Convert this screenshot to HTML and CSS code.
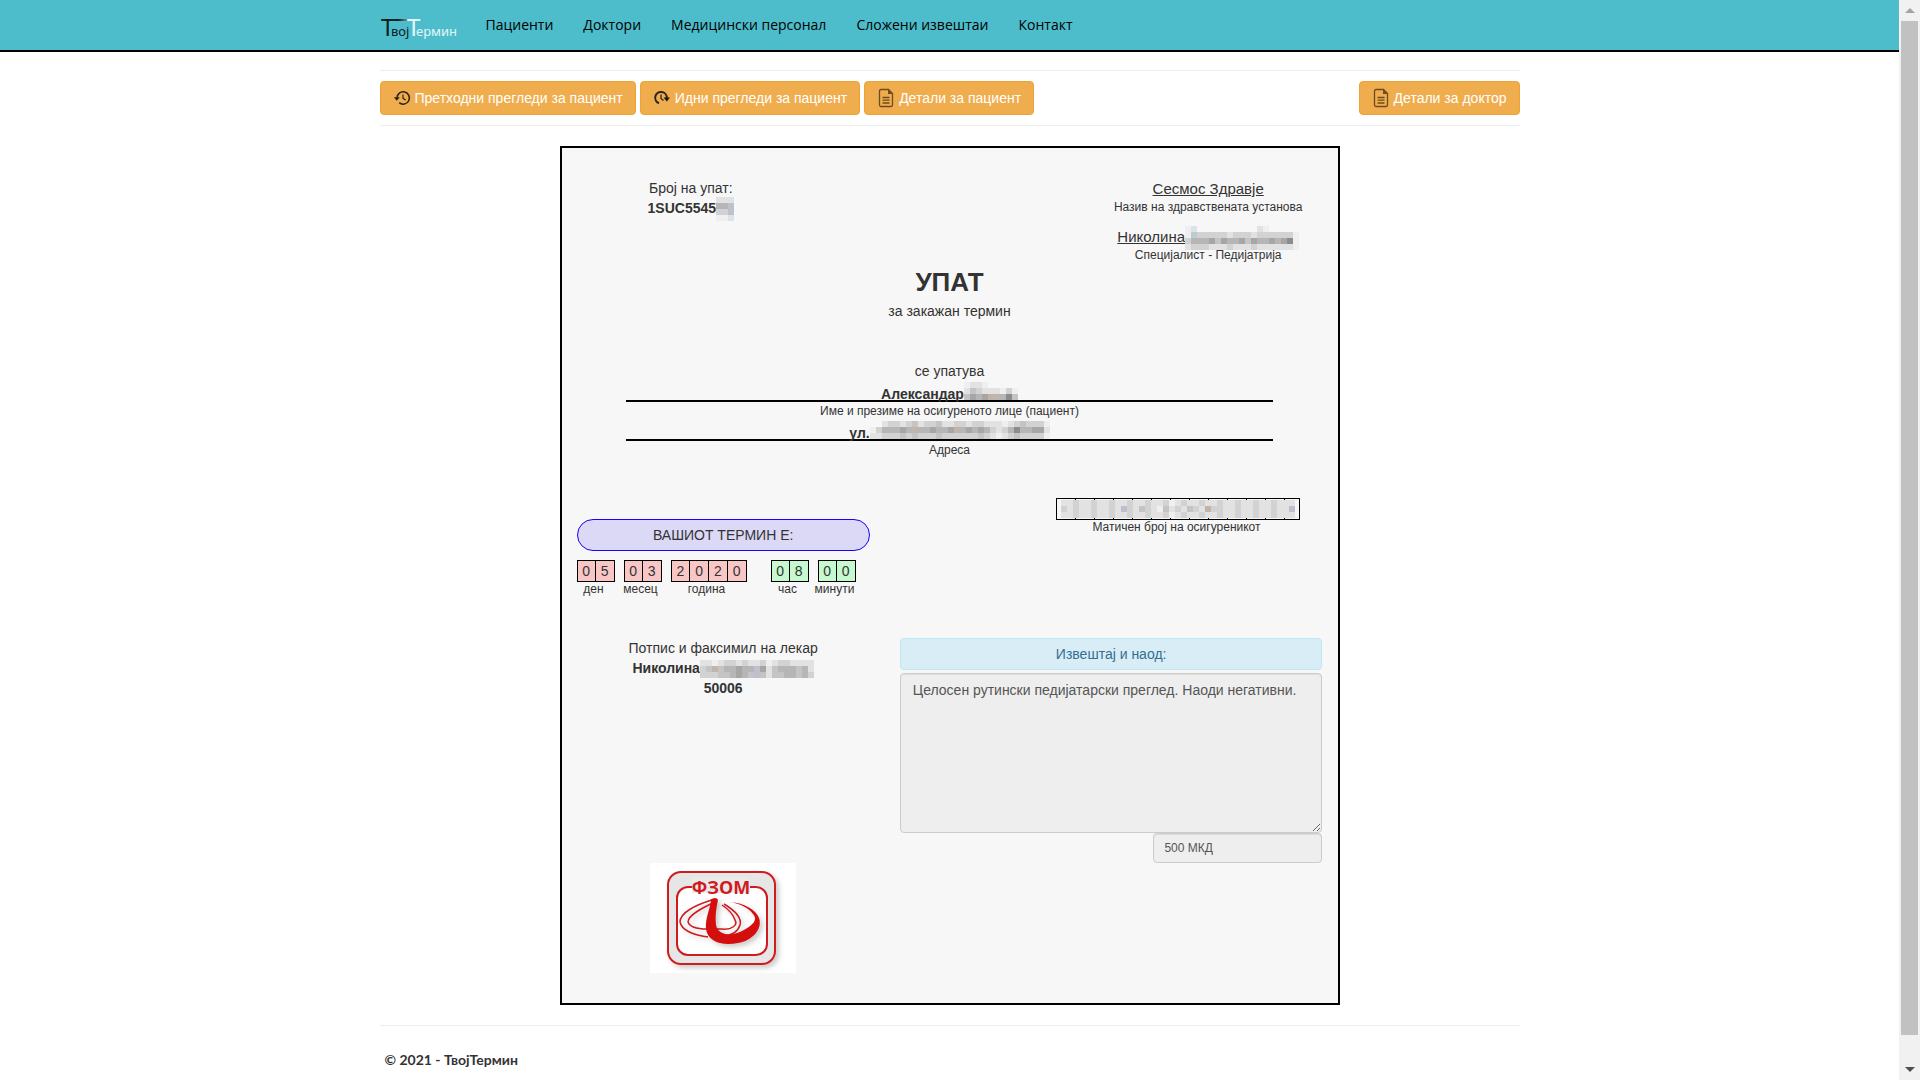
FILE: index.html
```html
<!DOCTYPE html>
<html lang="mk">
<head>
<meta charset="utf-8">
<title>ТвојТермин - Упат</title>
<link rel="stylesheet" href="styles.css">
</head>
<body>
<svg class="defs" aria-hidden="true">
  <symbol id="icon-file" viewBox="0 0 18 20">
    <path d="M4 1.500h7.500l4 4V17a1.500 1.500 0 0 1-1.500 1.500H4A1.500 1.500 0 0 1 2.500 17V3A1.500 1.500 0 0 1 4 1.500z" fill="none" stroke="#6b4b1f" stroke-width="1.300"/>
    <path d="M11 1.500v4.500h4.500z" fill="#6b4b1f"/>
    <path d="M5.500 9.500h7M5.500 12.200h7M5.500 15h7" stroke="#6b4b1f" stroke-width="1.300"/>
  </symbol>
  <symbol id="icon-history" viewBox="0 0 18 20">
    <path d="M4 10a6.200 6.200 0 1 1 2.200 4.700" fill="none" stroke="#2b2416" stroke-width="1.600"/>
    <path d="M.8 9.200h6L3.800 12.800z" fill="#2b2416"/>
    <path d="M10 6.500V10.300l2.700 1.700" fill="none" stroke="#2b2416" stroke-width="1.200"/>
  </symbol>
  <symbol id="icon-upcoming" viewBox="0 0 18 20">
    <path d="M6 15.200A5.800 5.800 0 1 1 13.800 10" fill="none" stroke="#2b2416" stroke-width="2"/>
    <path d="M10.500 9.500h6.500L13.800 13.500z" fill="#1e190f"/>
    <path d="M8 6.500V10.500l2.500 2" fill="none" stroke="#2b2416" stroke-width="1.300"/>
  </symbol>
</svg>

<div class="page">
  <header class="navbar">
    <div class="container navbar-inner">
      <a class="brand" href="#" aria-label="ТвојТермин">
        <svg width="80" height="36" viewBox="0 -8 80 36">
          <defs><linearGradient id="bar"><stop offset="0" stop-color="#0c2126"/><stop offset=".45" stop-color="#0c2126"/><stop offset="1" stop-color="#fff"/></linearGradient></defs>
          <rect x="2" y="3" width="36" height="2" fill="url(#bar)"/>
          <g font-family="Noto Sans, sans-serif">
            <text x="1" y="20" font-size="24" fill="#0c2126">Т</text>
            <text x="11" y="20" font-size="13" fill="#0c2126">вој</text>
            <text x="27" y="20" font-size="24" fill="#e4f6f9">Т</text>
            <text x="36" y="20" font-size="13" fill="#e4f6f9">ермин</text>
          </g>
        </svg>
      </a>
      <nav class="menu">
        <a href="#">Пациенти</a>
        <a href="#">Доктори</a>
        <a href="#">Медицински персонал</a>
        <a href="#">Сложени извештаи</a>
        <a href="#">Контакт</a>
      </nav>
    </div>
  </header>

  <main class="container">
    <div class="toolbar">
      <button class="btn" type="button"><svg width="18" height="20"><use href="#icon-history"/></svg>Претходни прегледи за пациент</button>
      <button class="btn" type="button"><svg width="18" height="20"><use href="#icon-upcoming"/></svg>Идни прегледи за пациент</button>
      <button class="btn" type="button"><svg width="18" height="20"><use href="#icon-file"/></svg>Детали за пациент</button>
      <button class="btn btn-end" type="button"><svg width="18" height="20"><use href="#icon-file"/></svg>Детали за доктор</button>
    </div>

    <article class="referral">
      <div class="head">
        <div>Број на упат:<br><b>1SUC5545<span class="mosaic" data-rows="bbh eei cci aah"></span></b></div>
        <div class="institution">
          <div class="lead"><u>Сесмос Здравје</u></div>
          <div class="small">Назив на здравствената установа</div>
          <div class="lead doctor"><u>Николина</u><span class="mosaic" data-rows="ah..........ba..... akcccccbcccbcccccca ceeefdfeefdfeefefga bcccbbbcbbbcbbbbbba"></span></div>
          <div class="small">Специјалист - Педијатрија</div>
        </div>
      </div>

      <h1>УПАТ</h1>
      <p class="subtitle">за закажан термин</p>
      <p class="referred">се упатува</p>

      <div class="fields">
        <div class="line">Александар<span class="mosaic" data-rows="abba..... bdcbbbaca dfefjjegd"></span></div>
        <div class="small">Име и презиме на осигуреното лице (пациент)</div>
        <div class="line">ул.<span class="mosaic" data-rows="..bccbcdbccdbbccbccbbbabcdccca aceeefejeefeefjefefecbcegeeffb bbcccdcdcccdccccccdcbabcdcccca"></span></div>
        <div class="small">Адреса</div>
      </div>

      <div class="split">
        <div class="appointment">
          <div class="pill">ВАШИОТ ТЕРМИН Е:</div>
          <div class="digits">
            <div class="group"><div class="cells"><span>0</span><span>5</span></div><div class="tag">ден</div></div>
            <div class="group"><div class="cells"><span>0</span><span>3</span></div><div class="tag">месец</div></div>
            <div class="group year"><div class="cells"><span>2</span><span>0</span><span>2</span><span>0</span></div><div class="tag">година</div></div>
            <div class="group time"><div class="cells"><span>0</span><span>8</span></div><div class="tag">час</div></div>
            <div class="group"><div class="cells time-cells"><span>0</span><span>0</span></div><div class="tag">минути</div></div>
          </div>
        </div>
        <div class="insured">
          <div class="idbox"><span class="mosaic" data-rows="bbcbbcbbcbbcbbcbbcabcbbcbbcbbcbbcbbcbbb cbcbbcbbcbicbdcbadbcbdcbjccbbcbbcbbcbbi bbcbbcbbcbbcbbcbbcabcbbcbbcbbcbbcbbcbbb"></span></div>
          <div class="small tag">Матичен број на осигуреникот</div>
        </div>
      </div>

      <div class="split report-row">
        <div class="signature">
          <div>Потпис и факсимил на лекар</div>
          <b>Николина<span class="mosaic" data-rows="bbabccbcbbcabccbbbb cdjdeefeeifbdeeedeb cccddefedidbddeedec"></span></b>
          <b>50006</b>
          <svg class="stamp" width="146" height="110" viewBox="0 0 146 110">
            <defs><filter id="shadow" x="-20%" y="-20%" width="140%" height="140%"><feDropShadow dx="3" dy="3" stdDeviation="2.500" flood-color="#000" flood-opacity=".2"/></filter></defs>
            <rect width="146" height="110" fill="#fff"/>
            <rect x="18" y="9" width="107" height="92" rx="13" fill="#e6e6e6" stroke="#d01a1f" stroke-width="2" filter="url(#shadow)"/>
            <rect x="27" y="24" width="90" height="68" rx="11" fill="#fff" stroke="#d01a1f" stroke-width="2"/>
            <rect x="42" y="14" width="58" height="16" fill="#e9e9e9"/>
            <text x="71" y="31" text-anchor="middle" font-family="Open Sans, sans-serif" font-weight="700" font-size="18" fill="#d01a1f">ФЗОМ</text>
            <g fill="none" stroke="#d01a1f" stroke-width="1.500" filter="url(#shadow)">
              <path d="M62 37C45 42 30 50 30 59C32 68 44 72 58 74"/>
              <path d="M65 39C52 45 38 52 38 59C40 65 48 66 57 66H72C82 67 88 62 85 57C83 51 78 46 72 42"/>
              <path d="M74 41C84 47 92 55 90 62C87 71 78 74 66 72"/>
            </g>
            <path d="M60 37Q66 33 68 37C66 46 65 54 66 62C68 72 80 74 92 68C104 62 108 56 103 51C98 44 90 41 80 39C95 40 106 47 109 55C113 66 102 78 88 80C72 83 58 79 56 66C55 56 60 46 61 38Z" fill="#d40a0f" filter="url(#shadow)"/>
          </svg>
        </div>
        <div class="report">
          <label class="report-title" for="report">Извештај и наод:</label>
          <textarea id="report" readonly>Целосен рутински педијатарски преглед. Наоди негативни.</textarea>
          <input class="price" type="text" value="500 МКД" aria-label="Цена" readonly>
        </div>
      </div>
    </article>

    <footer>© 2021 - ТвојТермин</footer>
  </main>
</div>
<div class="scrollbar" aria-hidden="true">
  <span class="arrow up"></span>
  <span class="thumb"></span>
  <span class="arrow down"></span>
</div>
<script src="mosaic.js"></script>
</body>
</html>
```
FILE: styles.css
```css
* { box-sizing: border-box; }

body {
  margin: 0;
  display: grid;
  grid-template-columns: 1fr 21px;
  min-height: 100vh;
  background: #fff;
  color: #333;
  font: 14px/20px "Liberation Sans", Arial, sans-serif;
}

.defs { position: absolute; width: 0; height: 0; }

.container {
  width: 100%;
  max-width: 1170px;
  margin: 0 auto;
  padding: 0 15px;
}

.navbar {
  background: #4dbdcc;
  border-bottom: 2px solid #000;
}
.navbar-inner { display: flex; align-items: center; min-height: 50px; }
.brand { display: flex; padding-top: 2px; width: 91px; }
.menu { display: flex; }
.menu a {
  padding: 15px;
  color: #000;
  text-decoration: none;
  font: 400 14px/20px "Open Sans", sans-serif;
}

.toolbar {
  display: flex;
  gap: 4px;
  margin: 18px 0 20px;
  padding: 10px 0;
  border-top: 1px solid #eee;
  border-bottom: 1px solid #eee;
}
.btn {
  display: flex;
  align-items: center;
  gap: 4px;
  padding: 6px 12px;
  border: 1px solid #eea236;
  border-radius: 4px;
  background: #f0ad4e;
  color: #fff;
  font: inherit;
  white-space: nowrap;
}
.btn-end { margin-left: auto; }

.referral {
  width: 100%;
  max-width: 780px;
  margin: 0 auto;
  padding: 30px 0;
  border: 2px solid #000;
  background: #f7f7f7;
  text-align: center;
}
.head {
  display: grid;
  grid-template-columns: repeat(2, calc(100% / 3));
  justify-content: space-between;
}
.institution { padding-top: 1px; }
.lead { font-size: 15px; }
.doctor { margin-top: 11px; }
.small { font-size: 12px; line-height: 17px; }

h1 { margin: 4px 0 5px; font-size: 26px; line-height: 28px; font-weight: 700; }
p { margin: 0; }
.referred { margin-top: 40px; }

.fields { width: calc(100% * 10 / 12); margin: 0 auto 39px; }
.line {
  height: 18px;
  margin: 3px 0 1px;
  border-bottom: 2px solid #000;
  font-weight: 700;
}

.split { display: grid; grid-template-columns: 5fr 7fr; }
.appointment { padding: 21px 15px 0; }
.pill {
  padding: 5px;
  border: 1px solid #1a00ff;
  border-radius: 16px;
  background: #dcd9f7;
}
.digits { display: flex; gap: 9px; margin-top: 9px; }
.group { display: flex; flex-direction: column; align-items: center; width: 38px; }
.year { width: 76px; }
.time { margin-left: 15px; }
.cells { display: flex; width: 100%; border: 1px solid #000; background: #f9c6c6; }
.cells span { flex: 1; }
.cells span + span { border-left: 1px solid #000; }
.time .cells, .time-cells { background: #c6f9cf; }
.tag { margin-right: 4px; font-size: 12px; line-height: 14px; }

.insured { justify-self: end; margin-right: 37px; }
.idbox {
  display: flex;
  align-items: center;
  justify-content: center;
  width: 244px;
  height: 22px;
  border: 1px solid #000;
  background: repeating-linear-gradient(90deg, transparent 0 18px, #000 18px 19px);
}

.report-row { margin-top: 42px; }
.signature { display: flex; flex-direction: column; align-items: center; }
.stamp { margin-top: auto; }
.report { display: flex; flex-direction: column; padding: 0 15px 110px; }
.report-title {
  padding: 5px;
  margin-bottom: 3px;
  border: 1px solid #bce8f1;
  border-radius: 4px;
  background: #d9edf7;
  color: #31708f;
}
textarea, .price {
  border: 1px solid #ccc;
  border-radius: 4px;
  background: #eee;
  box-shadow: inset 0 1px 1px rgba(0, 0, 0, .075);
  color: #555;
  font: inherit;
}
textarea { height: 160px; padding: 6px 12px; resize: vertical; }
.price { align-self: end; width: 40%; height: 30px; padding: 5px 10px; font-size: 12px; line-height: 18px; }

.mosaic { display: inline-block; vertical-align: middle; margin: -4px 0; line-height: 0; }
.mosaic svg { display: block; }
.line .mosaic { vertical-align: top; margin: -2px 0; }

footer {
  margin-top: 20px;
  padding: 24px 5px 14px;
  border-top: 1px solid #eee;
  font: 700 14px/20px Lato, sans-serif;
}

.scrollbar {
  position: sticky;
  top: 0;
  display: flex;
  flex-direction: column;
  align-items: center;
  height: 100vh;
  background: #f1f1f1;
}
.thumb { flex: 1; width: 17px; margin-bottom: 24px; background: #c1c1c1; }
.arrow { height: 21px; display: flex; align-items: center; }
.arrow::before { content: ""; border: 5px solid transparent; }
.up::before { border-top: 0; border-bottom-color: #a3a3a3; }
.down::before { border-bottom: 0; border-top-color: #505050; }
```
FILE: mosaic.js
```javascript
// Draws the pixelated patches that hide personal data.
const SIZE = 6;
const COLORS = {
  a: '#efefef', b: '#e2e2e2', c: '#d2d2d2', d: '#c4c4c4', e: '#b6b6b6', f: '#a6a6a6',
  g: '#8c8c8c', h: '#dce2ea', i: '#bcc1cc', j: '#c0b5aa', k: '#bccdd0'
};
document.querySelectorAll('.mosaic').forEach(el => {
  const rows = el.dataset.rows.split(' ');
  const cols = Math.max(...rows.map(r => r.length));
  let cells = '';
  rows.forEach((row, y) => [...row].forEach((c, x) => {
    if (COLORS[c]) cells += `<rect x="${x * SIZE}" y="${y * SIZE}" width="${SIZE}" height="${SIZE}" fill="${COLORS[c]}"/>`;
  }));
  el.innerHTML = `<svg width="${cols * SIZE}" height="${rows.length * SIZE}" shape-rendering="crispEdges">${cells}</svg>`;
});
```
